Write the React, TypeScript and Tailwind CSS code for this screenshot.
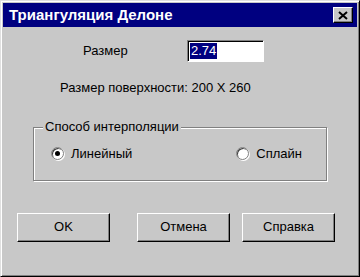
import React from 'react';

const Radio: React.FC<{ checked?: boolean; label: string }> = ({ checked, label }) => (
  <label className="flex items-center gap-[7px]">
    <span className="relative flex h-[13px] w-[13px] items-center justify-center rounded-full border border-[#808080] bg-white shadow-[inset_1px_1px_0_#404040,1px_1px_0_#ffffff]">
      {checked && <span className="h-[5px] w-[5px] rounded-full bg-black" />}
    </span>
    <span>{label}</span>
  </label>
);

const Button: React.FC<{ label: string; className?: string }> = ({ label, className }) => (
  <button
    className={`h-[29px] w-[93px] border border-t-white border-l-white border-r-black border-b-black bg-[#c8c8c8] shadow-[inset_-1px_-1px_0_#808080] text-[13px] ${className ?? ''}`}
  >
    {label}
  </button>
);

export default function App() {
  return (
    <div
      className="flex h-[277px] w-[360px] flex-col border border-t-[#e0e0e0] border-l-[#e0e0e0] border-r-black border-b-black bg-[#c8c8c8] text-[13px] text-black shadow-[inset_1px_1px_0_#ffffff,inset_-1px_-1px_0_#808080]"
      style={{ fontFamily: '"Liberation Sans", Arial, sans-serif' }}
    >
      <div className="mx-[2px] mt-[2px] flex h-[24px] items-center justify-between bg-[#000080] pl-[6px] pr-[4px]">
        <span className="text-[15px] font-bold text-white">Триангуляция Делоне</span>
        <span className="flex h-[16px] w-[20px] items-center justify-center border border-t-white border-l-white border-r-black border-b-black bg-[#c8c8c8] shadow-[inset_-1px_-1px_0_#808080]">
          <svg width="10" height="9" viewBox="0 0 10 9">
            <path d="M1 1 L9 8 M9 1 L1 8" stroke="#000" strokeWidth="2" />
          </svg>
        </span>
      </div>

      <div className="mt-[13px] flex items-center">
        <span className="ml-[82px] w-[104px]">Размер</span>
        <div className="flex h-[22px] w-[77px] items-center border border-t-[#808080] border-l-[#808080] border-r-white border-b-white bg-white pl-[2px] shadow-[inset_1px_1px_0_#000000]">
          <span className="bg-[#000080] px-[1px] leading-[16px] text-white">2.74</span>
        </div>
      </div>

      <div className="ml-[59px] mt-[16px]">Размер поверхности: 200 X 260</div>

      <div className="relative mx-[32px] mt-[29px] h-[54px] border border-[#808080] shadow-[inset_1px_1px_0_#ffffff,1px_1px_0_#ffffff]">
        <span className="absolute -top-[9px] left-[9px] bg-[#c8c8c8] px-[2px] leading-[16px]">Способ интерполяции</span>
        <div className="flex h-full items-center justify-between pl-[17px] pr-[24px]">
          <Radio checked label="Линейный" />
          <Radio label="Сплайн" />
        </div>
      </div>

      <div className="mt-[32px] flex">
        <Button label="OK" className="ml-[16px]" />
        <Button label="Отмена" className="ml-[27px]" />
        <Button label="Справка" className="ml-[12px]" />
      </div>
    </div>
  );
}
